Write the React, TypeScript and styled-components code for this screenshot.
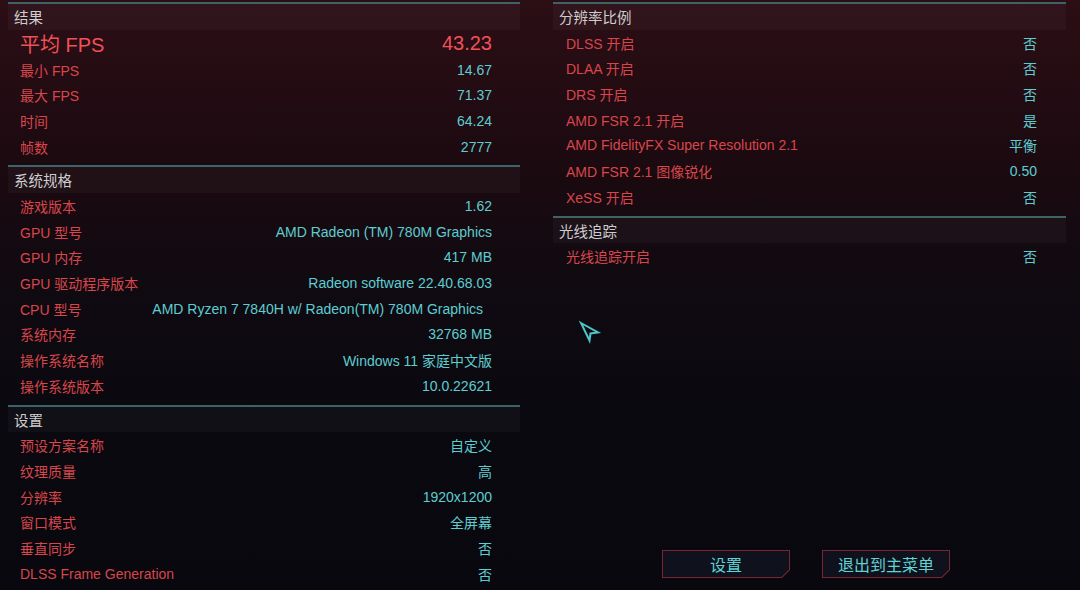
import React from "react";
import styled, { createGlobalStyle } from "styled-components";

const GlobalStyle = createGlobalStyle`
  html, body {
    margin: 0;
    padding: 0;
    background: #08080e;
  }
  body {
    font-family: "Liberation Sans", "Noto Sans CJK SC", sans-serif;
  }
`;

const Page = styled.div`
  position: relative;
  box-sizing: border-box;
  width: 1080px;
  height: 590px;
  overflow: hidden;
  display: flex;
  gap: 33px;
  padding: 2px 14px 0 8px;
  background: linear-gradient(
    180deg,
    #2c0e15 0%,
    #250c13 12%,
    #1a0a10 30%,
    #100a11 48%,
    #0a090f 70%,
    #08080e 100%
  );
`;

const Column = styled.div<{ $w: number }>`
  width: ${(p) => p.$w}px;
  display: flex;
  flex-direction: column;
`;

const Section = styled.section`
  border-top: 2px solid #3d6369;
  padding-bottom: 6px;
`;

const SectionHeader = styled.div<{ $indent: number }>`
  box-sizing: border-box;
  height: 25.7px;
  padding-top: 3px;
  line-height: 22.7px;
  padding-left: ${(p) => p.$indent}px;
  background: rgba(255, 255, 255, 0.03);
  color: #cdcdcf;
  font-size: 14.5px;
`;

const Row = styled.div<{ $big?: boolean; $left: number; $right: number }>`
  display: flex;
  align-items: center;
  justify-content: space-between;
  height: ${(p) => (p.$big ? 27 : 25.7)}px;
  padding: 0 ${(p) => p.$right}px 0 ${(p) => p.$left}px;
  font-size: ${(p) => (p.$big ? 20 : 14)}px;
`;

const Label = styled.span<{ $big?: boolean }>`
  color: ${(p) => (p.$big ? "#ee5257" : "#d8464b")};
  white-space: nowrap;
`;

const Value = styled.span<{ $big?: boolean; $inset?: number }>`
  color: ${(p) => (p.$big ? "#ee5257" : "#5ecdd1")};
  white-space: nowrap;
  padding-right: ${(p) => p.$inset ?? 0}px;
`;

const ButtonRow = styled.div`
  margin-top: auto;
  display: flex;
  justify-content: center;
  gap: 32px;
  padding: 0 7px 12px 0;
`;

const cut = "polygon(0 0, 100% 0, 100% calc(100% - 8px), calc(100% - 8px) 100%, 0 100%)";

const MenuButton = styled.button`
  position: relative;
  width: 128px;
  height: 28px;
  border: none;
  padding: 0;
  background: #7a2632;
  clip-path: ${cut};
  color: #5fd2d6;
  font-family: "Noto Sans CJK SC", sans-serif;
  font-size: 16px;
  cursor: pointer;
  &::before {
    content: "";
    position: absolute;
    inset: 1px;
    background: #0f111c;
    clip-path: polygon(0 0, 100% 0, 100% calc(100% - 7.5px), calc(100% - 7.5px) 100%, 0 100%);
  }
  span {
    position: relative;
  }
`;

const Cursor = styled.svg`
  position: absolute;
  left: 578px;
  top: 320px;
`;

type Item = [string, string, number?];

const results: Item[] = [
  ["最小 FPS", "14.67"],
  ["最大 FPS", "71.37"],
  ["时间", "64.24"],
  ["帧数", "2777"],
];

const specs: Item[] = [
  ["游戏版本", "1.62"],
  ["GPU 型号", "AMD Radeon (TM) 780M Graphics"],
  ["GPU 内存", "417 MB"],
  ["GPU 驱动程序版本", "Radeon software 22.40.68.03"],
  ["CPU 型号", "AMD Ryzen 7 7840H w/ Radeon(TM) 780M Graphics", 9],
  ["系统内存", "32768 MB"],
  ["操作系统名称", "Windows 11 家庭中文版"],
  ["操作系统版本", "10.0.22621"],
];

const settings: Item[] = [
  ["预设方案名称", "自定义"],
  ["纹理质量", "高"],
  ["分辨率", "1920x1200"],
  ["窗口模式", "全屏幕"],
  ["垂直同步", "否"],
  ["DLSS Frame Generation", "否"],
];

const scaling: Item[] = [
  ["DLSS 开启", "否"],
  ["DLAA 开启", "否"],
  ["DRS 开启", "否"],
  ["AMD FSR 2.1 开启", "是"],
  ["AMD FidelityFX Super Resolution 2.1", "平衡"],
  ["AMD FSR 2.1 图像锐化", "0.50"],
  ["XeSS 开启", "否"],
];

const rayTracing: Item[] = [["光线追踪开启", "否"]];

const Rows = ({ items, left, right }: { items: Item[]; left: number; right: number }) => (
  <>
    {items.map(([l, v, inset]) => (
      <Row key={l} $left={left} $right={right}>
        <Label>{l}</Label>
        <Value $inset={inset}>{v}</Value>
      </Row>
    ))}
  </>
);

export default function App() {
  return (
    <>
      <GlobalStyle />
      <Page>
        <Column $w={512}>
          <Section>
            <SectionHeader $indent={6}>结果</SectionHeader>
            <Row $big $left={12} $right={28}>
              <Label $big>平均 FPS</Label>
              <Value $big>43.23</Value>
            </Row>
            <Rows items={results} left={12} right={28} />
          </Section>
          <Section>
            <SectionHeader $indent={6}>系统规格</SectionHeader>
            <Rows items={specs} left={12} right={28} />
          </Section>
          <Section>
            <SectionHeader $indent={6}>设置</SectionHeader>
            <Rows items={settings} left={12} right={28} />
          </Section>
        </Column>
        <Column $w={513}>
          <Section>
            <SectionHeader $indent={6}>分辨率比例</SectionHeader>
            <Rows items={scaling} left={13} right={29} />
          </Section>
          <Section>
            <SectionHeader $indent={6}>光线追踪</SectionHeader>
            <Rows items={rayTracing} left={13} right={29} />
          </Section>
          <ButtonRow>
            <MenuButton>
              <span>设置</span>
            </MenuButton>
            <MenuButton>
              <span>退出到主菜单</span>
            </MenuButton>
          </ButtonRow>
        </Column>
        <Cursor width="24" height="24" viewBox="0 0 24 24">
          <path
            d="M3 3 L20 12.5 L12.5 13.5 L11.5 20.5 Z"
            fill="none"
            stroke="#4fc4c8"
            strokeWidth="2"
            strokeLinejoin="miter"
          />
        </Cursor>
      </Page>
    </>
  );
}
